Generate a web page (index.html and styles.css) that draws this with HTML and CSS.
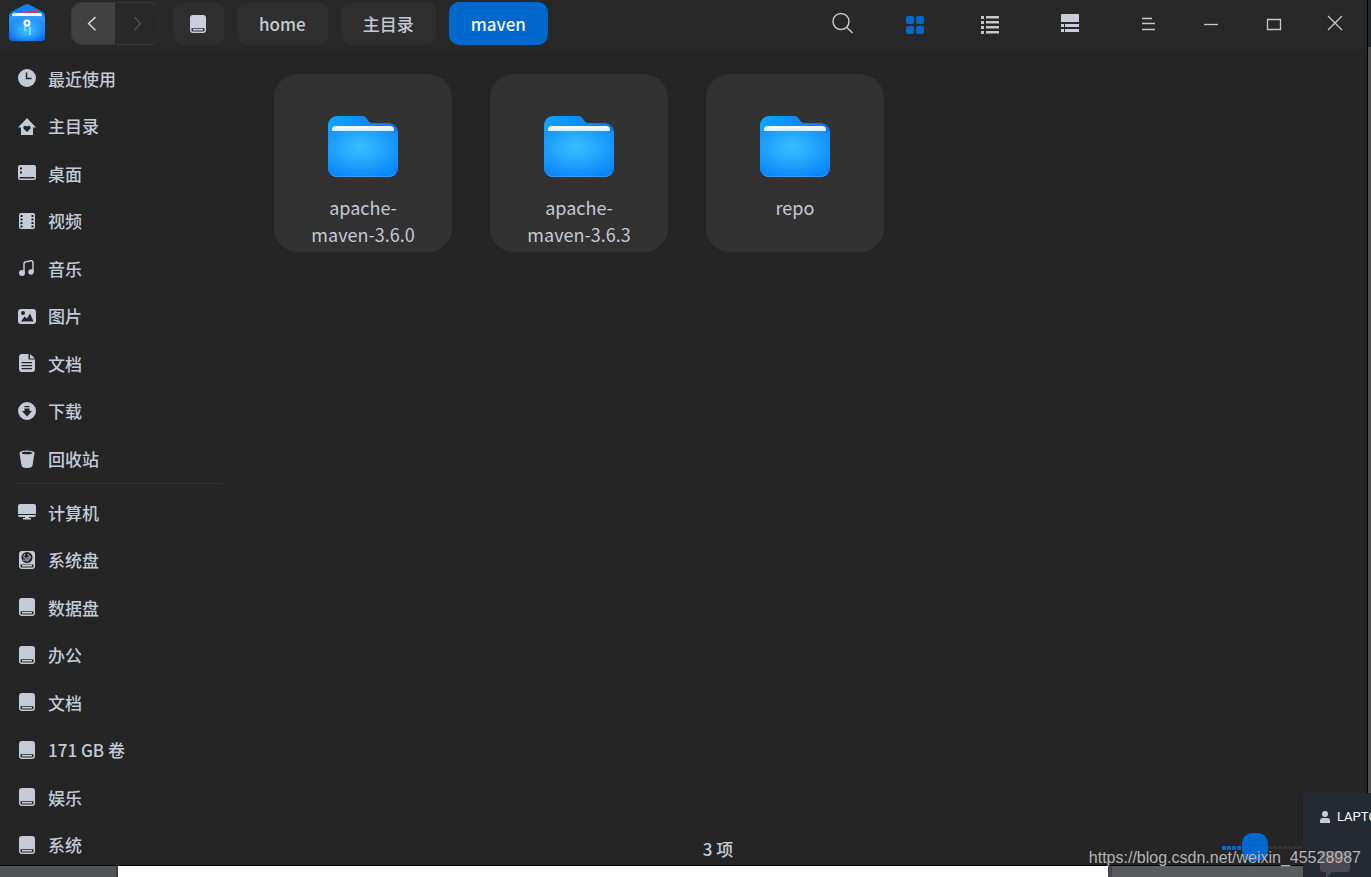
FILE: index.html
```html
<!DOCTYPE html>
<html lang="zh-CN">
<head>
<meta charset="utf-8">
<meta name="viewport" content="width=device-width, initial-scale=1">
<title>maven</title>
<link rel="stylesheet" href="styles.css">
</head>
<body>
<svg class="defs" aria-hidden="true">
  <defs>
    <radialGradient id="folder-face" cx="46%" cy="34%" r="72%">
      <stop offset="0" stop-color="#36c0ff"/><stop offset="1" stop-color="#0a86fb"/>
    </radialGradient>
    <linearGradient id="folder-back" x1="0" y1="0" x2="1" y2="0">
      <stop offset="0" stop-color="#10a5fc"/><stop offset="1" stop-color="#0874ef"/>
    </linearGradient>
    <linearGradient id="app-face" x1="0" y1="0" x2="0" y2="1">
      <stop offset="0" stop-color="#2f9dfd"/><stop offset="1" stop-color="#0869f5"/>
    </linearGradient>
    <radialGradient id="app-glow" cx="50%" cy="60%" r="50%">
      <stop offset="0" stop-color="#3fc9ff"/><stop offset="1" stop-color="#3fc9ff" stop-opacity="0"/>
    </radialGradient>
    <linearGradient id="paper" x1="0" y1="0" x2="0" y2="1">
      <stop offset="0" stop-color="#ffffff"/><stop offset="1" stop-color="#c5ebff"/>
    </linearGradient>
  </defs>
  <symbol id="disk" viewBox="0 0 18 18">
    <path fill-rule="evenodd" d="M4 0h10a3 3 0 0 1 3 3v12a3 3 0 0 1-3 3H4a3 3 0 0 1-3-3V3a3 3 0 0 1 3-3zM2.500 13.200v1.800a1.500 1.500 0 0 0 1.500 1.500h10a1.500 1.500 0 0 0 1.500-1.500v-1.800z"/>
    <path d="M4 14h10v1.500H4z"/>
  </symbol>
  <symbol id="folder" viewBox="0 0 70 61">
    <path fill="url(#folder-back)" d="M0 9a9 9 0 0 1 9-9h25c6 0 5 7 11 7h16a9 9 0 0 1 9 9v36a9 9 0 0 1-9 9H9a9 9 0 0 1-9-9z"/>
    <path fill="url(#paper)" d="M4 16v-2a4 4 0 0 1 4-4h54a4 4 0 0 1 4 4v2z"/>
    <path fill="url(#folder-face)" d="M0 15h70v37a9 9 0 0 1-9 9H9a9 9 0 0 1-9-9z"/>
    <path fill="none" stroke="#5aa9ef" stroke-opacity=".6" d="M3 58q3 2.500 6 2.500h52q3 0 6-2.500"/>
  </symbol>
</svg>

<div class="desktop">
  <div class="window">
    <header class="titlebar">
      <svg class="app-icon" viewBox="0 0 36 38" aria-hidden="true">
        <path fill="#1283ee" d="M0 12q0-3 4-5L15 1q3-1.500 6 0l11 6q4 2 4 5v8H0z"/>
        <path fill="#d83a55" d="M3 10l26-4v3L4 12z"/>
        <path fill="#fff" d="M3 12q0-3 3-3h25q2 0 2 3v3H3z"/>
        <rect y="12" width="36" height="25" rx="4" fill="url(#app-face)"/>
        <rect y="12" width="36" height="25" rx="4" fill="url(#app-glow)"/>
        <circle cx="18" cy="19" r="2.500" fill="none" stroke="#fff" stroke-width="2"/>
        <path fill="none" stroke="#b9e9ff" stroke-width="1.200" d="M16 22v5M21 22v9"/>
      </svg>
      <nav class="history" aria-label="历史">
        <button class="step step-back" aria-label="后退"><svg viewBox="0 0 44 43"><path d="M24 15l-7 6.500 7 7"/></svg></button>
        <button class="step step-next" aria-label="前进" disabled><svg viewBox="0 0 44 43"><path d="M20 15l6 6.500-6 7"/></svg></button>
      </nav>
      <nav class="crumbs" aria-label="路径">
        <button class="crumb" aria-label="磁盘"><svg class="crumb-icon"><use href="#disk"/></svg></button>
        <button class="crumb">home</button>
        <button class="crumb">主目录</button>
        <button class="crumb crumb-current">maven</button>
      </nav>
      <div class="tools">
        <button class="search" aria-label="搜索"><svg class="line" viewBox="0 0 24 24"><circle cx="10" cy="9.500" r="8"/><path d="M15.500 15l6 6"/></svg></button>
        <button class="view view-active" aria-label="图标视图"><svg viewBox="0 0 24 24"><rect x="4" y="4" width="8" height="8" rx="2"/><rect x="14" y="4" width="8" height="8" rx="2"/><rect x="4" y="14" width="8" height="8" rx="2"/><rect x="14" y="14" width="8" height="8" rx="2"/></svg></button>
        <button class="view" aria-label="列表视图"><svg viewBox="0 0 24 24"><path d="M1 4h3v3H1zM6 4h13v2.500H6zM1 9h3v3H1zM6 9h13v2.500H6zM1 14h3v3H1zM6 14h13v2.500H6zM1 19h3v3H1zM6 19h13v2.500H6z"/></svg></button>
        <button class="view" aria-label="分栏视图"><svg viewBox="0 0 24 24"><path fill="#ccccdc" d="M4 2h16a1 1 0 0 1 1 1v7H3V3a1 1 0 0 1 1-1zM3 12h3v3H3zM7 12h14v3H7zM3 17h3v3H3zM7 17h14v3H7z"/></svg></button>
      </div>
      <div class="controls">
        <button class="control" aria-label="菜单"><svg class="line" viewBox="0 0 24 24"><path d="M5 6.500h10M5 11.500h13M5 17.500h13"/></svg></button>
        <button class="control" aria-label="最小化"><svg class="line" viewBox="0 0 24 24"><path d="M5 12.500h14"/></svg></button>
        <button class="control" aria-label="最大化"><svg class="line" viewBox="0 0 24 24"><path d="M6.500 7.500h13v10h-13z"/></svg></button>
        <button class="control" aria-label="关闭"><svg class="line" viewBox="0 0 24 24"><path d="M5 4l14 14M19 4L5 18"/></svg></button>
      </div>
    </header>

    <aside class="sidebar">
      <ul class="places">
        <li><a class="place" href="#recent"><svg class="place-icon" viewBox="0 0 18 18"><circle cx="9" cy="9" r="9"/><path class="cut" d="M8.500 3.500v6h5"/></svg>最近使用</a></li>
        <li><a class="place" href="#home"><svg class="place-icon" viewBox="0 0 18 18"><path fill-rule="evenodd" d="M9 1l9 9.500h-3V18H3v-7.500H0zM9 15l3.300-3.200c1.500-2-1.600-4.300-3.300-2-1.700-2.300-4.800 0-3.300 2z"/></svg>主目录</a></li>
        <li><a class="place" href="#desktop"><svg class="place-icon" viewBox="0 0 18 18"><path fill-rule="evenodd" d="M2 1h14a2 2 0 0 1 2 2v11a2 2 0 0 1-2 2H2a2 2 0 0 1-2-2V3a2 2 0 0 1 2-2zM1.500 13v1.500h15V13zM2 3.500v2h2v-2zM2 7.500v2h2v-2z"/></svg>桌面</a></li>
        <li><a class="place" href="#videos"><svg class="place-icon" viewBox="0 0 18 18"><path fill-rule="evenodd" d="M3 1h12a2 2 0 0 1 2 2v12a2 2 0 0 1-2 2H3a2 2 0 0 1-2-2V3a2 2 0 0 1 2-2zM2.500 3v2h2V3zM2.500 6.500v2h2v-2zM2.500 10v2h2v-2zM2.500 13.500v2h2v-2zM13.500 3v2h2V3zM13.500 6.500v2h2v-2zM13.500 10v2h2v-2zM13.500 13.500v2h2v-2z"/></svg>视频</a></li>
        <li><a class="place" href="#music"><svg class="place-icon" viewBox="0 0 18 18"><circle cx="4" cy="14" r="3"/><circle cx="13" cy="13" r="2.700"/><path class="note" d="M6 14V5q0-2 2-2.300l5-.9Q15 1.500 15 4v9"/></svg>音乐</a></li>
        <li><a class="place" href="#pictures"><svg class="place-icon" viewBox="0 0 18 18"><path fill-rule="evenodd" d="M3 2h12a3 3 0 0 1 3 3v9a3 3 0 0 1-3 3H3a3 3 0 0 1-3-3V5a3 3 0 0 1 3-3zM3 14.500h12.500L12 6.500l-3 5-2.500-2zM3 6a2 2 0 1 0 4 0 2 2 0 0 0-4 0z"/></svg>图片</a></li>
        <li><a class="place" href="#documents"><svg class="place-icon" viewBox="0 0 18 18"><path fill-rule="evenodd" d="M4 0h6.500v5.500H17V15a3 3 0 0 1-3 3H4a3 3 0 0 1-3-3V3a3 3 0 0 1 3-3zM3.500 8v1.300h10.500V8zM3.500 11v1.300h10.500V11zM3.500 14v1.300h10.500V14z"/><path d="M12 0l5 4.500h-5z"/></svg>文档</a></li>
        <li><a class="place" href="#downloads"><svg class="place-icon" viewBox="0 0 18 18"><path fill-rule="evenodd" d="M9 0a9 9 0 1 1 0 18A9 9 0 0 1 9 0zM6.500 4v1.300h5V4zM6.500 6.500V9H4l5 5.500L14 9h-2.500V6.500z"/></svg>下载</a></li>
        <li><a class="place" href="#trash"><svg class="place-icon" viewBox="0 0 18 18"><path fill-rule="evenodd" d="M1.500 3C1.500-.5 16.500-.5 16.500 3L14.500 15.500Q14 18 9 18T3.500 15.500zM3.500 3c0 1.700 11 1.700 11 0s-11-1.700-11 0z"/></svg>回收站</a></li>
        <li class="divider" role="separator"></li>
        <li><a class="place" href="#computer"><svg class="place-icon" viewBox="0 0 18 18"><path d="M2 1h14a2 2 0 0 1 2 2v8H0V3a2 2 0 0 1 2-2zM0 12h18q0 2-2 2H2q-2 0-2-2zM7 14h4v1h2v1.500H5V15h2z"/></svg>计算机</a></li>
        <li><a class="place" href="#system-disk"><svg class="place-icon" viewBox="0 0 18 18"><path fill-rule="evenodd" d="M4 0h10a3 3 0 0 1 3 3v12a3 3 0 0 1-3 3H4a3 3 0 0 1-3-3V3a3 3 0 0 1 3-3zM2.500 13.500V15A1.500 1.500 0 0 0 4 16.500h10a1.500 1.500 0 0 0 1.500-1.500v-1.500z"/><path d="M4 14h10v1.500H4z"/><circle class="cut-fill" cx="9" cy="6.500" r="5.500"/><path class="swirl" d="M5 9c5 1 8-3 5-6M7 3C4 7 8 9 10 6M12 5c1 3-2 5-4 5"/></svg>系统盘</a></li>
        <li><a class="place" href="#data-disk"><svg class="place-icon"><use href="#disk"/></svg>数据盘</a></li>
        <li><a class="place" href="#office"><svg class="place-icon"><use href="#disk"/></svg>办公</a></li>
        <li><a class="place" href="#docs-disk"><svg class="place-icon"><use href="#disk"/></svg>文档</a></li>
        <li><a class="place" href="#volume"><svg class="place-icon"><use href="#disk"/></svg>171 GB 卷</a></li>
        <li><a class="place" href="#fun"><svg class="place-icon"><use href="#disk"/></svg>娱乐</a></li>
        <li><a class="place" href="#system"><svg class="place-icon"><use href="#disk"/></svg>系统</a></li>
      </ul>
    </aside>

    <main class="files">
      <a class="file" href="#apache-maven-3.6.0"><svg class="folder"><use href="#folder"/></svg><span>apache-<wbr>maven-3.6.0</span></a>
      <a class="file" href="#apache-maven-3.6.3"><svg class="folder"><use href="#folder"/></svg><span>apache-<wbr>maven-3.6.3</span></a>
      <a class="file" href="#repo"><svg class="folder"><use href="#folder"/></svg><span>repo</span></a>
    </main>

    <footer class="status">
      <span class="count">3 项</span>
      <input class="zoom" type="range" min="0" max="100" value="36" aria-label="图标大小">
    </footer>
  </div>
  <div class="edge"></div>
  <div class="taskbar"><div class="task-left"></div><div class="task-page"></div><div class="task-right"></div></div>
</div>

<div class="notice">
  <div class="notice-user">
    <svg class="user-icon" viewBox="0 0 10 12"><circle cx="5" cy="3" r="3"/><path d="M0 12V10q0-3 3-3h4q3 0 3 3v2z"/></svg>
    <span>LAPTO</span>
  </div>
  <svg class="chat-icon" viewBox="0 0 30 27" aria-hidden="true"><path d="M3 0h24q3 0 3 3v15q0 3-3 3H12l-6 6v-6H3q-3 0-3-3V3q0-3 3-3z"/><path class="chat-mark" d="M8 11q7-5 14 0"/></svg>
</div>
<div class="watermark">https://blog.csdn.net/weixin_45528987</div>
</body>
</html>
```
FILE: styles.css
```css
* {
  box-sizing: border-box;
}

body {
  margin: 0;
  overflow: hidden;
  background: #000;
  color: #c4cad6;
  font: 500 17px/24px "Noto Sans CJK SC", sans-serif;
}

button {
  margin: 0;
  padding: 0;
  border: 0;
  background: none;
  color: inherit;
  font: inherit;
}

a {
  color: inherit;
  text-decoration: none;
}

svg {
  display: block;
  flex: none;
  fill: currentColor;
}

.defs {
  position: absolute;
  width: 0;
  height: 0;
}

.desktop {
  display: grid;
  grid-template: minmax(0, 1fr) 11px / minmax(0, 1fr) 3px;
  height: 100vh;
}

.window {
  display: grid;
  grid-template: 55px minmax(0, 1fr) 32px / 225px minmax(0, 1fr);
  border-right: 1px solid #000;
  border-bottom: 1px solid #000;
  background: #252525;
}

/* Title bar */
.titlebar {
  grid-column: 1 / -1;
  display: flex;
  align-items: flex-start;
  padding: 2px 1px 0 9px;
  background: linear-gradient(#282828 46px, #232323);
}

.app-icon {
  width: 36px;
  height: 38px;
  margin: 2px 26px 0 0;
}

.history {
  display: flex;
  width: 88px;
  height: 43px;
  margin-right: 14px;
  overflow: hidden;
  border: 1px solid #383838;
  border-right-color: #2b2b2b;
  border-radius: 10px;
}

.step {
  flex: 1;
}

.step svg {
  width: 100%;
  height: 43px;
  margin-top: -1px;
  fill: none;
  stroke: currentColor;
  stroke-width: 1.5;
}

.step-back {
  background: #414141;
  color: #d8d8d8;
}

.step-next {
  color: #505050;
}

.crumbs {
  display: flex;
  gap: 13px;
}

.crumb {
  height: 43px;
  padding: 0 22px;
  border-radius: 10px;
  background: #2f2f2f;
}

.crumb:first-child {
  padding: 0 17px 0 16px;
}

.crumb-icon {
  width: 18px;
  height: 18px;
  color: #ccccdc;
}

.crumb-current {
  background: #0067cd;
  color: #f2f6fc;
}

.tools {
  display: flex;
  margin: 0 9px 0 auto;
}

.tools button,
.control {
  display: grid;
  place-items: center;
  height: 43px;
  color: #c8c8c8;
}

.tools svg,
.control svg {
  width: 24px;
  height: 24px;
}

.tools .search {
  width: 64px;
}

.tools .view {
  width: 78px;
}

.tools .view-active {
  color: #0067cd;
}

.line {
  fill: none;
  stroke: currentColor;
  stroke-width: 1.5;
}

.controls {
  display: flex;
}

.control {
  width: 62px;
}

.control .line {
  stroke-width: 1.3;
}

/* Sidebar */
.sidebar {
  grid-row: 2 / 4;
  min-height: 0;
  overflow: hidden;
  display: flex;
  flex-direction: column;
}

.places {
  flex: 1;
  display: flex;
  flex-direction: column;
  margin: 0 0 -4px;
  padding: 0;
  list-style: none;
}

.places li {
  flex: 1 0 24px;
  display: flex;
}

.place {
  flex: 1;
  display: flex;
  align-items: center;
  gap: 12px;
  padding-left: 18px;
}

.place-icon {
  width: 18px;
  height: 18px;
  margin-bottom: 1px;
}

.cut,
.note,
.swirl {
  fill: none;
  stroke: #252525;
  stroke-width: 1.5;
}

.note {
  stroke: currentColor;
}

.swirl {
  stroke: currentColor;
  stroke-width: 1;
}

.cut-fill {
  fill: #252525;
}

.places .divider {
  flex: none;
  height: 6px;
  margin: 0 2px 0 16px;
  border-top: 1px solid #303030;
}

/* Folder grid */
.files {
  display: flex;
  flex-wrap: wrap;
  align-content: flex-start;
  gap: 38px;
  padding: 19px 49px;
  overflow: hidden;
}

.file {
  display: flex;
  flex-direction: column;
  align-items: center;
  gap: 17px;
  width: 178px;
  min-height: 178px;
  padding: 42px 24px 4px;
  border-radius: 24px;
  background: #323232;
  font-size: 18px;
  font-weight: 400;
  line-height: 27px;
  text-align: center;
}

.folder {
  width: 70px;
  height: 61px;
}

/* Status bar */
.status {
  display: flex;
  align-items: center;
}

.count {
  flex: 1;
  text-align: center;
}

.zoom {
  width: 82px;
  height: 28px;
  margin: 0 63px 4px 11px;
  appearance: none;
  background: repeating-linear-gradient(90deg, #0067cd 0 4px, transparent 4px 5px) 0 13px / 24px 4px no-repeat;
}

.zoom::-webkit-slider-runnable-track {
  height: 28px;
  background: repeating-linear-gradient(90deg, #333 0 4px, transparent 4px 5px) 46px 13px / 100% 3px no-repeat;
}

.zoom::-webkit-slider-thumb {
  width: 26px;
  height: 28px;
  appearance: none;
  border-radius: 10px;
  background: #0067cd;
}

/* Desktop behind the window */
.edge {
  background: linear-gradient(#22262d 47px, #505054 47px);
}

.taskbar {
  grid-column: 1 / -1;
  display: grid;
  grid-template-columns: 118px minmax(0, 1fr) 263px;
  background: #fff;
}

.task-left {
  border-right: 2px solid #3b3d3f;
  background: #505456;
}

.task-right {
  border-left: 4px solid #45484c;
  background: #5a5b5f;
}

.notice {
  position: absolute;
  right: 0;
  bottom: 0;
  width: 68px;
  height: 84px;
  padding: 12px 0 0 17px;
  overflow: hidden;
  background: #252932;
  color: #fff;
  font: 13px/24px Roboto, sans-serif;
}

.notice-user {
  display: flex;
  align-items: center;
  gap: 7px;
}

.user-icon {
  width: 10px;
  height: 12px;
  color: #c9ccd4;
}

.chat-icon {
  width: 30px;
  height: 27px;
  margin-top: 22px;
  color: #4b4753;
}

.chat-mark {
  fill: none;
  stroke: #8c514c;
  stroke-width: 2;
}

.watermark {
  position: absolute;
  right: 10px;
  bottom: 7px;
  color: #b5b5b5;
  font: 16px/24px "Liberation Sans", sans-serif;
}
```
